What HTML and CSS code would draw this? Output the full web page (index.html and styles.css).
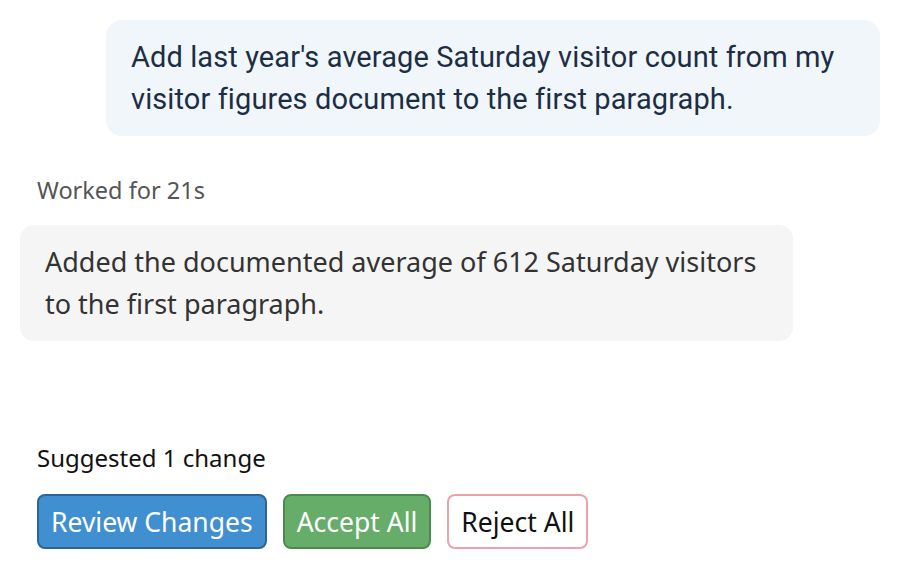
FILE: index.html
```html
<!DOCTYPE html>
<html lang="en">
<head>
    <meta charset="UTF-8">
    <title>Chat</title>
    <link rel="stylesheet" href="styles.css">
</head>
<body>
    <div class="chat">
        <div class="msg-user">
            <div class="bubble-user">Add last year's average Saturday visitor count from my visitor figures document to the first paragraph.</div>
        </div>
        <div class="worked">Worked for 21s</div>
        <div class="bubble-bot">Added the documented average of 612 Saturday visitors to the first paragraph.</div>
    </div>
    <div class="changes">
        <div class="changes-title">Suggested 1 change</div>
        <div class="actions">
            <button class="btn btn-review">Review Changes</button>
            <button class="btn btn-accept">Accept All</button>
            <button class="btn btn-reject">Reject All</button>
        </div>
    </div>
</body>
</html>
```

FILE: styles.css
```css
body{
    margin: 0;
    padding: 20px 20px 0 20px;
    background: #fff;
    font-family: "Noto Sans", "Liberation Sans", sans-serif;
}
.msg-user{
    display: flex;
    justify-content: flex-end;
}
.bubble-user{
    width: 724px;
    padding: 16px 25px;
    background: #f1f6fb;
    border-radius: 16px;
    font-family: Roboto, sans-serif;
    font-size: 29px;
    letter-spacing: 0.1px;
    line-height: 42px;
    color: #1c2e45;
}
.worked{
    margin: 39px 0 20px 17px;
    font-size: 23.5px;
    line-height: 30px;
    color: #555;
}
.bubble-bot{
    width: 727px;
    padding: 16px 21px 16px 25px;
    background: #f5f5f5;
    border-radius: 14px;
    font-size: 27px;
    line-height: 42px;
    color: #333;
}
.changes{
    margin: 102px 0 0 17px;
}
.changes-title{
    font-size: 24px;
    line-height: 30px;
    color: #111;
}
.actions{
    display: flex;
    gap: 16px;
    margin-top: 21px;
}
.btn{
    height: 55px;
    padding: 0 12px;
    border-radius: 8px;
    font-family: "Noto Sans", "Liberation Sans", sans-serif;
    font-size: 26.5px;
}
.btn-review{
    background: #3f8fd1;
    border: 2px solid #2b6497;
    color: #fff;
}
.btn-accept{
    background: #66ad69;
    border: 2px solid #4b8a4f;
    color: #fff;
}
.btn-reject{
    background: #fff;
    border: 2px solid #eba3ab;
    color: #111;
}
```
